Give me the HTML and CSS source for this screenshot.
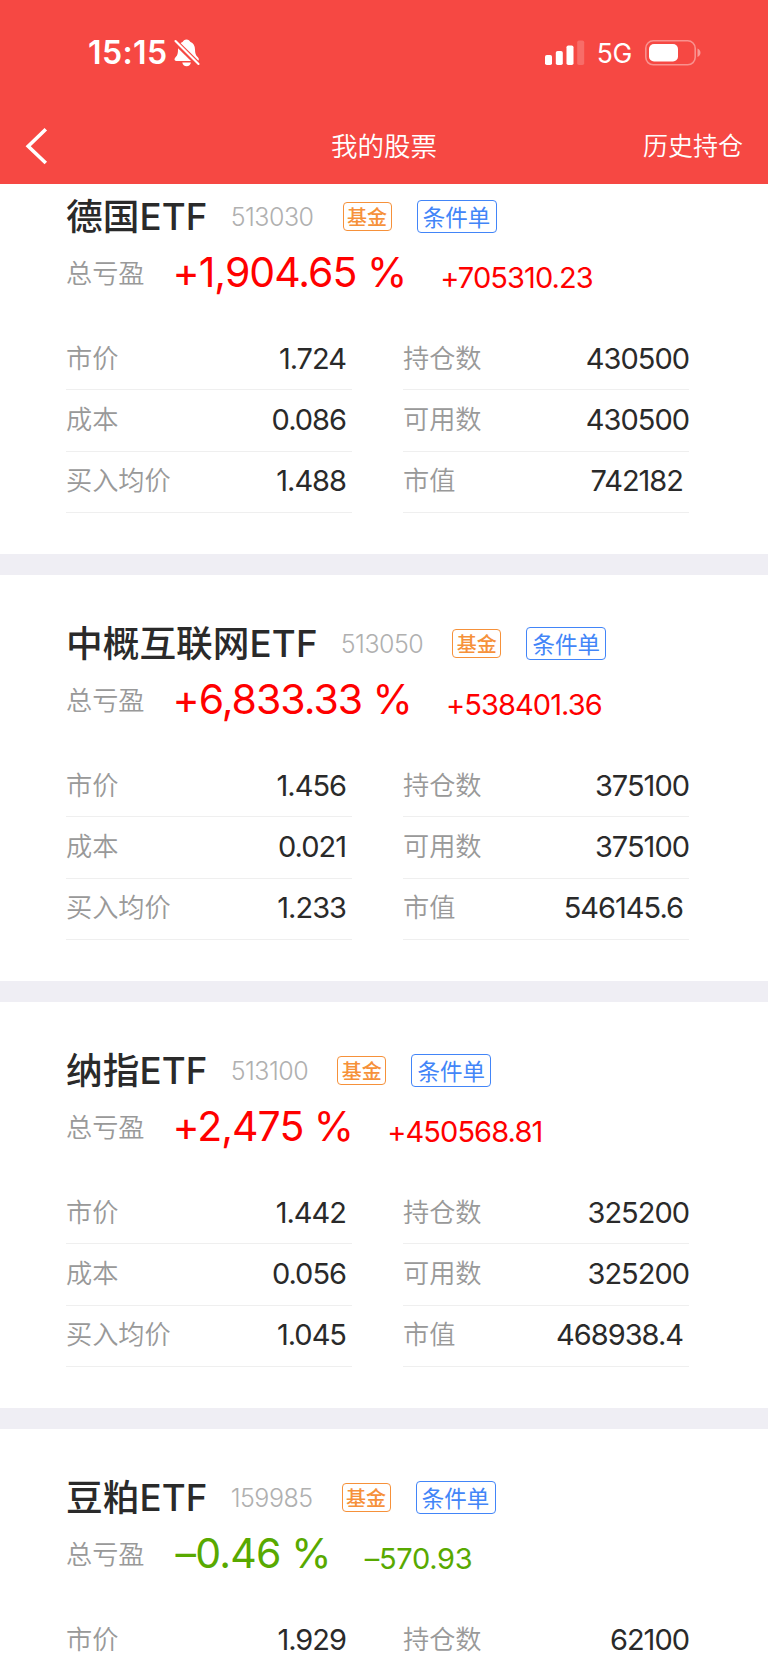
FILE: index.html
```html
<!DOCTYPE html>
<html lang="zh-CN">
<head>
    <meta charset="UTF-8">
    <meta name="viewport" content="width=device-width, initial-scale=1.0">
    <title>我的股票</title>
    <link rel="stylesheet" href="styles.css">
</head>
<body>
    <header class="header">
        <div class="status-bar">
            <div class="status-left">
                <span class="time">15:15</span>
                <svg class="bell" width="26" height="28" viewBox="0 0 26 28">
                    <path fill="#fff" d="M12.5 0.5c2 0 3.2 1 3.7 2.300C19.500 4 21 7 21 10.500c0 4 .8 5.600 2.600 7.600 1 1.100 1.400 2 1.200 2.800-.2.700-.9 1-1.800 1H2.300C1.200 21.900.6 21.400.5 20.500c0-.9.4-1.600 1.200-2.400C3.500 16.200 4 14.500 4 10.500 4 7 5.500 4 8.800 2.800 9.300 1.500 10.500.5 12.500.5zM8.300 23.500h8.600c-.3 2.200-2 3.700-4.300 3.700s-4-1.500-4.300-3.700z"/>
                    <path stroke="#f64843" stroke-width="5.500" d="M-1 0.500L26 27"/>
                    <path stroke="#fff" stroke-width="2.100" stroke-linecap="round" d="M1.500 2L24.500 25"/>
                </svg>
            </div>
            <div class="status-right">
                <svg width="40" height="25" viewBox="0 0 40 25" fill="#fff">
                    <rect x="0" y="15" width="7" height="10" rx="1.800"/>
                    <rect x="10.800" y="11" width="7" height="14" rx="1.800"/>
                    <rect x="21.500" y="5.500" width="7" height="19.500" rx="1.800"/>
                    <rect x="32.200" y="0.500" width="7" height="24.500" rx="1.800" opacity="0.2"/>
                </svg>
                <span class="network">5G</span>
                <svg width="56" height="26" viewBox="0 0 56 26">
                    <rect x="0.800" y="0.800" width="49.400" height="24" rx="7.500" fill="none" stroke="#fff" stroke-opacity="0.4" stroke-width="1.600"/>
                    <rect x="4" y="4" width="29" height="17.500" rx="5" fill="#fff"/>
                    <path d="M52.500 8.500c1.900.8 3 2.400 3 4.300s-1.100 3.500-3 4.300z" fill="#fff" fill-opacity="0.45"/>
                </svg>
            </div>
        </div>
        <nav class="nav-bar">
            <svg class="back" width="24" height="38" viewBox="0 0 24 38" fill="none" stroke="#fff" stroke-width="3.600">
                <path d="M20.800 2.200L3.200 19.200l17.600 16.800"/>
            </svg>
            <h1>我的股票</h1>
            <a class="history">历史持仓</a>
        </nav>
    </header>

    <main>
        <section class="card">
            <div class="title-row">
                <h2>德国<span class="etf">ETF</span></h2>
                <span class="code">513030</span>
                <span class="tag fund">基金</span>
                <span class="tag order">条件单</span>
            </div>
            <div class="profit">
                <span class="label">总亏盈</span>
                <span class="percent">+1,904.65 %</span>
                <span class="amount">+705310.23</span>
            </div>
            <div class="details">
                <div class="item"><span>市价</span><b>1.724</b></div>
                <div class="item"><span>持仓数</span><b>430500</b></div>
                <div class="item"><span>成本</span><b>0.086</b></div>
                <div class="item"><span>可用数</span><b>430500</b></div>
                <div class="item"><span>买入均价</span><b>1.488</b></div>
                <div class="item value"><span>市值</span><b>742182</b></div>
            </div>
        </section>

        <section class="card">
            <div class="title-row">
                <h2>中概互联网<span class="etf">ETF</span></h2>
                <span class="code">513050</span>
                <span class="tag fund">基金</span>
                <span class="tag order">条件单</span>
            </div>
            <div class="profit">
                <span class="label">总亏盈</span>
                <span class="percent">+6,833.33 %</span>
                <span class="amount">+538401.36</span>
            </div>
            <div class="details">
                <div class="item"><span>市价</span><b>1.456</b></div>
                <div class="item"><span>持仓数</span><b>375100</b></div>
                <div class="item"><span>成本</span><b>0.021</b></div>
                <div class="item"><span>可用数</span><b>375100</b></div>
                <div class="item"><span>买入均价</span><b>1.233</b></div>
                <div class="item value"><span>市值</span><b>546145.6</b></div>
            </div>
        </section>

        <section class="card">
            <div class="title-row">
                <h2>纳指<span class="etf">ETF</span></h2>
                <span class="code">513100</span>
                <span class="tag fund">基金</span>
                <span class="tag order">条件单</span>
            </div>
            <div class="profit">
                <span class="label">总亏盈</span>
                <span class="percent">+2,475 %</span>
                <span class="amount">+450568.81</span>
            </div>
            <div class="details">
                <div class="item"><span>市价</span><b>1.442</b></div>
                <div class="item"><span>持仓数</span><b>325200</b></div>
                <div class="item"><span>成本</span><b>0.056</b></div>
                <div class="item"><span>可用数</span><b>325200</b></div>
                <div class="item"><span>买入均价</span><b>1.045</b></div>
                <div class="item value"><span>市值</span><b>468938.4</b></div>
            </div>
        </section>

        <section class="card">
            <div class="title-row">
                <h2>豆粕<span class="etf">ETF</span></h2>
                <span class="code">159985</span>
                <span class="tag fund">基金</span>
                <span class="tag order">条件单</span>
            </div>
            <div class="profit loss">
                <span class="label">总亏盈</span>
                <span class="percent">–0.46 %</span>
                <span class="amount">–570.93</span>
            </div>
            <div class="details">
                <div class="item"><span>市价</span><b>1.929</b></div>
                <div class="item"><span>持仓数</span><b>62100</b></div>
            </div>
        </section>
    </main>
</body>
</html>
```
FILE: styles.css
```css
* {
    box-sizing: border-box;
}
body {
    margin: 0;
    height: 1665px;
    overflow: hidden;
    display: flex;
    flex-direction: column;
    background: #fff;
    color: #2a2a2a;
    font-family: Inter, "Noto Sans CJK SC", sans-serif;
}
.header {
    height: 184px;
    flex: none;
    background: #f64843;
    color: #fff;
}
.status-bar {
    height: 105px;
    padding: 0 67px 0 88px;
    display: flex;
    justify-content: space-between;
    align-items: center;
}
.status-left, .status-right {
    display: flex;
    align-items: center;
}
.time {
    font-size: 32px;
    font-weight: 600;
    letter-spacing: 0.4px;
}
.bell {
    margin-left: 6px;
}
.network {
    margin: 1px 13px 0 12px;
    font-size: 26.5px;
    font-weight: 400;
    letter-spacing: -0.3px;
}
.nav-bar {
    height: 79px;
    padding: 0 25px;
    display: grid;
    grid-template-columns: 1fr auto 1fr;
    align-items: center;
}
.back {
    margin-top: 2px;
}
.nav-bar h1 {
    margin: 0 0 1px;
    font-size: 26.5px;
    font-weight: 350;
}
.history {
    justify-self: end;
    margin-bottom: 2px;
    font-size: 25px;
    font-weight: 350;
}
main {
    flex: 1;
    min-height: 0;
    overflow: hidden;
}
.card {
    height: 427px;
    padding: 48px 79px 0 66px;
    border-bottom: 21px solid #efeef4;
}
/* list is scrolled a little under the header */
.card:first-child {
    margin-top: -36px;
}
.title-row {
    height: 41px;
    display: flex;
    align-items: center;
    white-space: nowrap;
}
h2 {
    margin: 0;
    font-size: 36.7px;
    line-height: 41px;
    font-weight: 500;
}
.etf {
    letter-spacing: 0.2px;
}
.code {
    margin-left: 23px;
    font-size: 25px;
    font-weight: 300;
    letter-spacing: -0.5px;
    color: #b0b0b0;
}
.tag {
    border: 1px solid;
    border-radius: 4px;
    display: flex;
    align-items: center;
    justify-content: center;
}
.fund {
    width: 49px;
    height: 29px;
    margin-left: 29px;
    font-size: 20px;
    font-weight: 500;
    color: #f6913a;
}
.order {
    width: 80px;
    height: 33px;
    margin-left: 25px;
    padding-bottom: 2px;
    font-size: 22.5px;
    color: #4285f8;
}
.profit {
    height: 92px;
    padding-top: 11px;
    display: flex;
    align-items: flex-start;
    line-height: 48px;
    white-space: nowrap;
    color: #ff0000;
}
.profit.loss {
    color: #58a900;
}
.label {
    margin-top: 2px;
    font-size: 26.2px;
    font-weight: 350;
    color: #999;
}
.percent {
    margin-left: 28px;
    font-size: 41px;
    font-weight: 400;
    letter-spacing: -1px;
}
.loss .percent {
    margin-left: 31px;
    letter-spacing: -0.8px;
}
.amount {
    margin: 6px 0 0 34px;
    font-size: 29px;
    font-weight: 400;
    letter-spacing: -0.9px;
}
.loss .amount {
    letter-spacing: -0.3px;
}
.details {
    display: grid;
    grid-template-columns: 286px 286px;
    column-gap: 51px;
}
.item {
    height: 61.33px;
    display: flex;
    justify-content: space-between;
    align-items: center;
    border-bottom: 1px solid #efefef;
}
.item span {
    padding-bottom: 5px;
    font-size: 26.2px;
    font-weight: 350;
    color: #999;
}
.item b {
    padding-bottom: 2px;
    font-size: 29px;
    font-weight: 400;
    letter-spacing: -1px;
}
.item:nth-child(odd) b, .item.value b {
    padding-right: 6px;
}
```
